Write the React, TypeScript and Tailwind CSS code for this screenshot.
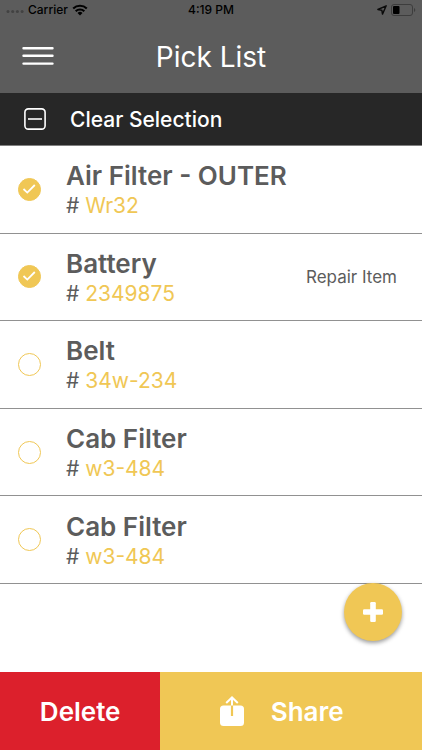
import { useState } from "react";

type Item = { id: number; name: string; part: string; note?: string };

const items: Item[] = [
  { id: 1, name: "Air Filter - OUTER", part: "Wr32" },
  { id: 2, name: "Battery", part: "2349875", note: "Repair Item" },
  { id: 3, name: "Belt", part: "34w-234" },
  { id: 4, name: "Cab Filter", part: "w3-484" },
  { id: 5, name: "Cab Filter", part: "w3-484" },
];

function StatusBar() {
  return (
    <div className="grid h-5 grid-cols-3 items-center px-[6px] text-[12px] leading-5 font-medium text-black">
      <div className="flex items-center gap-1">
        <svg width="18" height="6" viewBox="0 0 18 6" fill="#424242" aria-hidden="true">
          <circle cx="2" cy="4.5" r="1.5" />
          <circle cx="6.7" cy="4.5" r="1.5" />
          <circle cx="11.4" cy="4.5" r="1.5" />
          <circle cx="16.1" cy="4.5" r="1.5" />
        </svg>
        <span>Carrier</span>
        <svg width="16" height="12" viewBox="0 0 16 12" aria-hidden="true">
          <g fill="none" stroke="#000" strokeWidth="2.1">
            <path d="M1.2 4.5A9.7 9.7 0 0 1 14.8 4.5" />
            <path d="M3.7 7.2A6.1 6.1 0 0 1 12.3 7.2" />
          </g>
          <path d="M5.5 9A3.6 3.6 0 0 1 10.5 9L8 11.6Z" />
        </svg>
      </div>
      <span className="text-center">4:19 PM</span>
      <div className="flex items-center justify-end gap-1">
        <svg width="10" height="10" viewBox="0 0 10 10" fill="none" stroke="#0a0a0a" strokeWidth="1.4" strokeLinejoin="round" aria-hidden="true">
          <path d="M9.2 0.8L0.9 4.5L4.8 5.2L5.5 9.1Z" />
        </svg>
        <svg width="25" height="12" viewBox="0 0 25 12" aria-hidden="true">
          <rect x="0.5" y="0.5" width="21" height="11" rx="2.5" fill="none" stroke="#3d3d3d" />
          <rect x="2" y="2" width="6.5" height="8" rx="1" />
          <path d="M23 4A2.2 2.2 0 0 1 23 8Z" fill="#3d3d3d" />
        </svg>
      </div>
    </div>
  );
}

export default function App() {
  const [selected, setSelected] = useState<number[]>([1, 2]);
  const toggle = (id: number) =>
    setSelected((ids) => (ids.includes(id) ? ids.filter((i) => i !== id) : [...ids, id]));

  return (
    <div className="relative flex min-h-screen flex-col bg-white font-['Inter','Liberation_Sans',sans-serif] text-[#5c5c5c]">
      <header className="bg-[#5c5c5c]">
        <StatusBar />
        <div className="grid h-[73px] grid-cols-[1fr_auto_1fr] items-center px-[22px]">
          <button type="button" aria-label="Menu" className="w-8">
            <svg width="32" height="20" viewBox="0 0 32 20" stroke="#fff" strokeWidth="2.4" strokeLinecap="round" aria-hidden="true">
              <path d="M1.5 1.2H30.5M1.5 8.8H30.5M1.5 16.6H30.5" />
            </svg>
          </button>
          <h1 className="text-[28px] leading-9 text-white">Pick List</h1>
        </div>
      </header>

      <button
        type="button"
        onClick={() => setSelected([])}
        className="flex h-[53px] items-center gap-6 border-b border-[#808080] bg-[#272727] px-6 text-left text-[21px] font-medium text-white"
      >
        <svg width="22" height="22" viewBox="0 0 22 22" fill="none" stroke="#fff" strokeWidth="1.6" aria-hidden="true">
          <rect x="0.9" y="0.9" width="20.2" height="20.2" rx="3.4" />
          <path d="M4 11H18" />
        </svg>
        <span className="pt-0.5">Clear Selection</span>
      </button>

      <ul className="grid h-[438px] auto-rows-fr">
        {items.map((item) => (
          <li key={item.id} className="border-b border-[#919191]">
            <label className="flex h-full items-center pr-[25px] pl-[18px]">
              <span className="grid size-[23px] shrink-0 place-items-center">
                <input
                  type="checkbox"
                  checked={selected.includes(item.id)}
                  onChange={() => toggle(item.id)}
                  className="peer col-start-1 row-start-1 size-[23px] appearance-none rounded-full border border-[#f0c755] checked:bg-[#f0c755]"
                />
                <svg
                  className="pointer-events-none invisible col-start-1 row-start-1 peer-checked:visible"
                  width="23"
                  height="23"
                  viewBox="0 0 23 23"
                  fill="none"
                  stroke="#fff"
                  strokeWidth="1.8"
                  aria-hidden="true"
                >
                  <path d="M5.5 11L9.3 14.6L16.8 7" />
                </svg>
              </span>
              <span className="ml-[25px] flex flex-1 flex-col pt-1">
                <span className="text-[26px] leading-[30px] font-semibold">{item.name}</span>
                <span className="text-[21px] leading-[30px]">
                  # <span className="text-[#f0c755]">{item.part}</span>
                </span>
              </span>
              {item.note && <span className="text-[17px] leading-6">{item.note}</span>}
            </label>
          </li>
        ))}
      </ul>

      <button
        type="button"
        aria-label="Add item"
        className="absolute right-5 bottom-[109px] grid size-[58px] place-items-center rounded-full bg-[#f0c755] shadow-[0_2px_4px_rgba(0,0,0,0.4)]"
      >
        <svg width="20" height="20" viewBox="0 0 20 20" fill="#fff" aria-hidden="true">
          <rect x="7.2" y="0" width="5.6" height="20" rx="1.2" />
          <rect x="0" y="7.2" width="20" height="5.6" rx="1.2" />
        </svg>
      </button>

      <footer className="mt-auto grid h-[78px] grid-cols-[38%_1fr] text-[26px] font-semibold text-white">
        <button type="button" className="bg-[#dc202c]">
          Delete
        </button>
        <button type="button" className="flex items-center justify-center gap-[27px] bg-[#f0c755] pr-[19px]">
          <svg width="24" height="30" viewBox="0 0 24 30" aria-hidden="true">
            <rect x="0" y="9.5" width="24" height="20.5" rx="3.5" fill="#fff" />
            <path d="M12 9V20" stroke="#f0c755" strokeWidth="2.2" fill="none" />
            <path d="M12 9.5V1.5M6.2 6.9L12 1.4L17.8 6.9" stroke="#fff" strokeWidth="2" fill="none" />
          </svg>
          Share
        </button>
      </footer>
    </div>
  );
}
